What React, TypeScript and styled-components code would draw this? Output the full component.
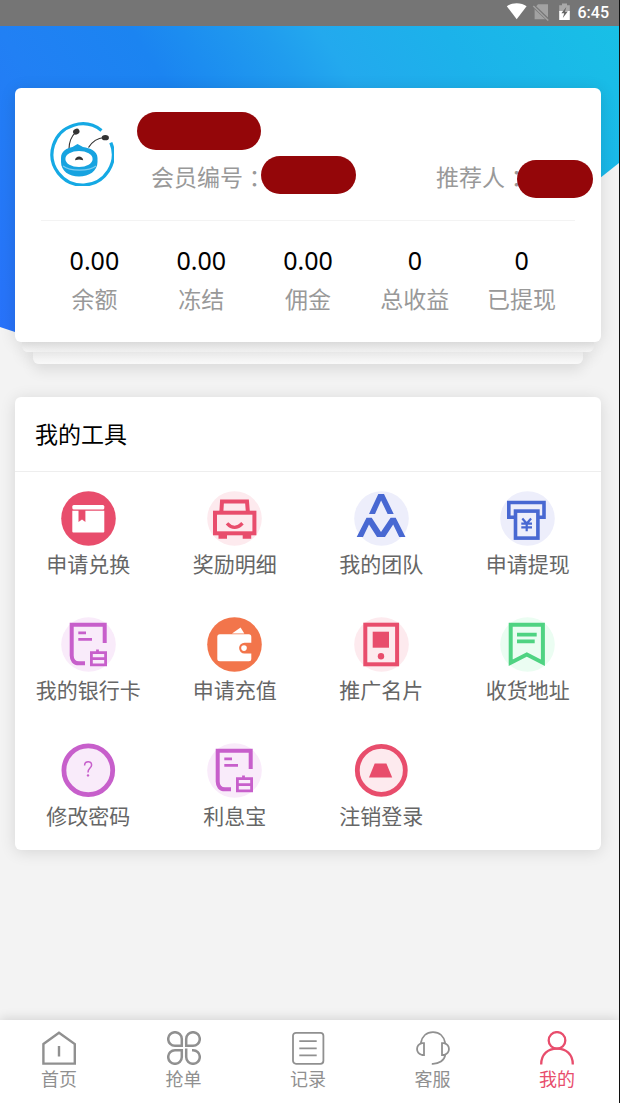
import React from "react";
import styled, { createGlobalStyle } from "styled-components";

const RED = "#e84d6c";
const PURPLE = "#c75fcb";
const BLUE = "#4868d2";
const GREEN = "#4fd382";
const ORANGE = "#f2754b";

const GlobalStyle = createGlobalStyle`
  *, *::before, *::after { box-sizing: border-box; }
  body {
    margin: 0;
    background: #f3f3f3;
    font-family: "Noto Sans", "Noto Sans CJK SC", sans-serif;
  }
  a { color: inherit; text-decoration: none; }
`;

const Page = styled.div`
  min-height: 100vh;
  display: flex;
  flex-direction: column;
  border-right: 1px solid #111;
`;

const StatusBar = styled.div`
  height: 26px;
  padding-right: 10px;
  display: flex;
  align-items: center;
  justify-content: flex-end;
  background: #757575;
  color: #fff;
  font: 500 16px/26px Roboto, sans-serif;
`;

const StatusIcons = styled.svg`
  width: 66px;
  height: 22px;
  margin-right: 6px;
`;

const Main = styled.main`
  position: relative;
  flex: 1;
  padding: 62px 18px 40px 15px;

  &::before {
    content: "";
    position: absolute;
    inset: 0 0 auto 0;
    height: 306px;
    background: linear-gradient(
      57deg,
      #2872fa 0%,
      #2180f4 24%,
      #1b84f1 40%,
      #1c8df0 46%,
      #209cee 56%,
      #23a9ee 63%,
      #1cb2ea 78%,
      #18c0e6 100%
    );
    clip-path: polygon(0 0, 100% 0, 100% 137px, calc(100% - 120px) 232px, 30px 311px, 0 301px);
  }
`;

const CardStack = styled.div`
  position: relative;
`;

const Card = styled.section`
  position: relative;
  background: #fff;
  border-radius: 6px;
  box-shadow: 0 2px 16px rgba(0, 0, 0, 0.12);
`;

const ProfileCard = styled(Card)`
  z-index: 1;
`;

const StackLayer = styled.div<{ $inset: number; $height: number }>`
  height: ${(p) => p.$height}px;
  margin: 0 ${(p) => p.$inset}px;
  border-radius: 0 0 6px 6px;
  background: linear-gradient(#ebebeb, #f9f9f9);
  box-shadow: 0 6px 14px rgba(0, 0, 0, 0.1);
`;

const Profile = styled.div`
  display: flex;
  gap: 22px;
  padding: 24px 8px 22px 33px;
`;

const Avatar = styled.svg`
  flex: none;
  width: 66px;
  height: 66px;
  margin: 8px 1px 0 0;
`;

const Info = styled.div`
  flex: 1;
`;

const Mask = styled.span<{ $width: number; $overlap?: number }>`
  position: relative;
  display: block;
  width: ${(p) => p.$width}px;
  height: 38px;
  margin-left: -${(p) => p.$overlap ?? 0}px;
  border-radius: 19px;
  background: #940609;
`;

const IdRow = styled.div`
  display: flex;
  justify-content: space-between;
  margin-top: 6px;
  padding-left: 14px;
`;

const IdField = styled.div<{ $align: string }>`
  display: flex;
  align-items: ${(p) => p.$align};
  color: #999;
  font-size: 23px;
  line-height: 42px;
  white-space: nowrap;
`;

const Colon = styled.span`
  font-family: "Noto Sans CJK TC", sans-serif;
`;

const Stats = styled.dl`
  display: flex;
  margin: 0 26px;
  padding: 19px 0 23px;
  border-top: 1px solid #f3f3f3;
`;

const Stat = styled.div`
  flex: 1;
  display: flex;
  flex-direction: column-reverse;
  text-align: center;
  white-space: nowrap;
`;

const StatLabel = styled.dt`
  color: #999;
  font-size: 23px;
  line-height: 39px;
`;

const StatValue = styled.dd`
  margin: 0;
  color: #000;
  font-size: 25px;
  line-height: 40px;
`;

const ToolsCard = styled(Card)`
  margin-top: 33px;
`;

const ToolsTitle = styled.h2`
  margin: 0;
  padding: 0 20px;
  border-bottom: 1px solid #eee;
  color: #000;
  font-size: 23px;
  font-weight: 400;
  line-height: 74px;
`;

const ToolGrid = styled.nav`
  display: grid;
  grid-template-columns: repeat(4, 1fr);
`;

const Tool = styled.a`
  display: flex;
  flex-direction: column;
  align-items: center;
  padding: 19px 0 16px;
  color: #666;
  font-size: 21px;
  line-height: 36px;
  white-space: nowrap;
`;

const ToolIcon = styled.svg`
  width: 55px;
  height: 55px;
  fill: none;
`;

const TabBar = styled.nav`
  position: sticky;
  bottom: 0;
  z-index: 2;
  display: flex;
  justify-content: space-between;
  height: 83px;
  padding: 11px 44px 0 41px;
  background: #fff;
  box-shadow: 0 -2px 10px rgba(0, 0, 0, 0.12);
`;

const Tab = styled.a<{ $active?: boolean }>`
  display: flex;
  flex-direction: column;
  align-items: center;
  color: ${(p) => (p.$active ? RED : "#909090")};
  font-size: 18px;
  line-height: 28px;
`;

const TabIcon = styled.svg`
  width: 34px;
  height: 34px;
  fill: none;
  stroke: currentColor;
  stroke-width: 2;
`;

const Disc = ({ color }: { color: string }) => <circle cx="27.5" cy="27.5" r="27.3" fill={color} />;

const ledgerIcon = (
  <>
    <Disc color="#f9ebfa" />
    <path d="M24 46.3H18C13 46.3 10.7 43 10.7 38.5V7.7H43.7V26" stroke={PURPLE} strokeWidth="4" />
    <path d="M17.3 15.8H25M17.3 22.3H31" stroke={PURPLE} strokeWidth="2.7" />
    <path d="M30.4 35.6H44.6V47.9H30.4ZM30.4 41.6H44.6M36.5 35V32.6" stroke={PURPLE} strokeWidth="2.8" />
  </>
);

const tools: { label: string; icon: React.ReactNode }[] = [
  {
    label: "申请兑换",
    icon: (
      <>
        <Disc color={RED} />
        <rect x="11.3" y="14" width="32" height="4.6" rx="1.5" fill="#fff" />
        <path d="M11.3 19.8H17.5V31L21 28.5L24.4 31V19.8H43.3V40.5Q43.3 41.5 42.3 41.5H12.3Q11.3 41.5 11.3 40.5Z" fill="#fff" />
      </>
    ),
  },
  {
    label: "奖励明细",
    icon: (
      <>
        <Disc color="#fdeaee" />
        <path d="M14.3 21.5L15 10.4H40L40.9 21.5" stroke={RED} strokeWidth="4" />
        <rect x="8" y="21.7" width="39.4" height="20.6" stroke={RED} strokeWidth="4" />
        <path d="M11.5 43H20V47.7H11.5ZM35.7 43H44.2V47.7H35.7Z" fill={RED} />
        <path d="M20 32.3Q27.5 40.5 35.5 32.3" stroke={RED} strokeWidth="3.4" />
      </>
    ),
  },
  {
    label: "我的团队",
    icon: (
      <>
        <Disc color="#edeefb" />
        <path d="M15 22.9L24.3 3H30L39.7 22.9H33.6L27.1 9.5L21 22.9Z" fill={BLUE} />
        <path d="M2.7 46L12.5 26.7H17.7L27 41L36.6 26.7H41.7L51.5 46H45.2L39.2 33.5L31 46H23L15 33.5L9 46Z" fill={BLUE} />
      </>
    ),
  },
  {
    label: "申请提现",
    icon: (
      <>
        <Disc color="#edeefb" />
        <path d="M14 26.3H8.8V11.5H44V26.3H39" stroke={BLUE} strokeWidth="3.6" />
        <rect x="15.5" y="20.1" width="22.4" height="27" stroke={BLUE} strokeWidth="3.6" />
        <path d="M22.3 27.5L26.7 32.5L31.1 27.5M26.7 32V40.3M21.3 32.7H32M21.3 36.4H32" stroke={BLUE} strokeWidth="2.2" />
      </>
    ),
  },
  { label: "我的银行卡", icon: ledgerIcon },
  {
    label: "申请充值",
    icon: (
      <>
        <Disc color={ORANGE} />
        <path d="M25 16.4L33.6 10.6L37.3 16.4Z" fill="#fff" />
        <rect x="10.3" y="17.3" width="34" height="27" rx="2.5" fill="#fff" />
        <path d="M45 25.7H37.5A5.4 5.4 0 0 0 37.5 36.5H45Z" fill={ORANGE} />
        <circle cx="37" cy="31.1" r="2.8" fill="#fff" />
      </>
    ),
  },
  {
    label: "推广名片",
    icon: (
      <>
        <Disc color="#fdeaee" />
        <rect x="11.3" y="7.7" width="31.8" height="39.6" stroke={RED} strokeWidth="4" />
        <rect x="18.7" y="14.7" width="16.3" height="16" fill={RED} />
        <circle cx="27" cy="39.3" r="3.2" fill={RED} />
      </>
    ),
  },
  {
    label: "收货地址",
    icon: (
      <>
        <Disc color="#ebfdf2" />
        <path d="M10.7 7.7H42.9V45.7L26.8 37.5L10.7 45.7Z" stroke={GREEN} strokeWidth="4" />
        <path d="M17 17.6H36.7M17 24.3H34.7" stroke={GREEN} strokeWidth="3.7" />
      </>
    ),
  },
  {
    label: "修改密码",
    icon: (
      <>
        <circle cx="27.3" cy="27.3" r="24.4" fill="#f9ebfa" stroke={PURPLE} strokeWidth="4.8" />
        <path d="M23.6 22.5C23.6 17.5 30.6 17.4 30.6 22C30.6 25.2 27 25 27 29.4" stroke={PURPLE} strokeWidth="1.5" />
        <circle cx="27" cy="32.4" r="1.2" fill={PURPLE} />
      </>
    ),
  },
  { label: "利息宝", icon: ledgerIcon },
  {
    label: "注销登录",
    icon: (
      <>
        <circle cx="27.3" cy="27.3" r="24" fill="#fdeaee" stroke={RED} strokeWidth="4.8" />
        <path d="M20.7 20.6H32.4L38.2 34.4H15Z" fill={RED} />
      </>
    ),
  },
];

const tabs: { label: string; active?: boolean; icon: React.ReactNode }[] = [
  { label: "首页", icon: <path d="M1.4 13L17 1.8L32.8 13V32.6H1.4ZM17 15V25.5" strokeWidth="2.4" /> },
  {
    label: "抢单",
    icon: (
      <g strokeWidth="2.5">
        <path d="M14.8 14.8H8A6.8 6.8 0 1 1 14.8 8Z" />
        <path d="M19.2 14.8V8A6.8 6.8 0 1 1 26 14.8Z" />
        <path d="M14.8 19.2V26A6.8 6.8 0 1 1 8 19.2Z" />
        <path d="M19.2 17.5V26A6.8 6.8 0 1 0 26 19.2H25" />
      </g>
    ),
  },
  {
    label: "记录",
    icon: (
      <g strokeWidth="1.8">
        <rect x="2" y="1.8" width="30.4" height="31" rx="3" />
        <path d="M8.3 10.2H25.7M8.3 17.3H25.7M8.3 24.3H25.7" />
      </g>
    ),
  },
  {
    label: "客服",
    icon: (
      <g strokeWidth="1.8">
        <path d="M4.8 12C6 5.5 10.5 1.2 17 1.2S28 5.5 29.2 12" />
        <path d="M8 12.2H6C-.6 14 -.6 22.2 6 24H8ZM26 12.2H28C34.6 14 34.6 22.2 28 24H26Z" />
        <path d="M29.2 24C28.5 29.5 23 33.2 15.8 32.8" />
      </g>
    ),
  },
  {
    label: "我的",
    active: true,
    icon: (
      <g strokeWidth="2.3">
        <circle cx="17" cy="9.4" r="8.3" />
        <path d="M1.2 33.4C1.2 23 8 17.7 17 17.7S32.8 23 32.8 33.4" />
      </g>
    ),
  },
];

const stats = [
  ["余额", "0.00"],
  ["冻结", "0.00"],
  ["佣金", "0.00"],
  ["总收益", "0"],
  ["已提现", "0"],
];

const Logo = () => (
  <Avatar viewBox="0 0 66 66" fill="none" aria-hidden="true">
    <path d="M53.5 10.4A30.6 30.6 0 1 0 62.8 22.6" stroke="#15a9e4" strokeWidth="3.2" />
    <path d="M21 29C21 23 23.5 16 27.5 12.5M40.5 27.5C44 22 50 18 56 17.5" stroke="#333" strokeWidth="1.2" />
    <ellipse cx="28.3" cy="11.7" rx="3.3" ry="2.8" transform="rotate(-30 28.3 11.7)" fill="#333" />
    <ellipse cx="57.3" cy="17.7" rx="3.6" ry="2.6" fill="#333" />
    <path d="M13 38C13 31 19 28 24.5 27L29.5 24L35 27C42 28 49.5 31 49.5 38V42C49.5 51 41 56.5 31 56.5S13 51 13 42Z" fill="#17a3e0" />
    <path d="M15 46C22 51.5 41 51.5 48 46" stroke="#7fcdf0" strokeWidth="1.2" />
    <ellipse cx="31" cy="39" rx="13.6" ry="8" fill="#fff" />
    <path d="M27 40.2C27.6 35.2 34.6 35.2 35.2 40.2L31 39.4Z" fill="#333" />
  </Avatar>
);

export default function App() {
  return (
    <Page>
      <GlobalStyle />
      <StatusBar>
        <StatusIcons viewBox="0 0 66 22" fill="none" aria-hidden="true">
          <path d="M0.8 4.3C6 .2 15.4 .2 20.6 4.3L10.7 17.2Z" fill="#fff" />
          <path d="M32 2.3H42V17.3H28.6V6Z" fill="#a2a2a2" />
          <path d="M26.5 3L43 18.7" stroke="#757575" strokeWidth="3.2" />
          <path d="M27.3 4L42.3 18.5" stroke="#a2a2a2" strokeWidth="1.5" />
          <path d="M53.2 3.2H56V1.4H61V3.2H63.8V10H53.2Z" fill="#a9a9a9" />
          <path d="M53.2 9H63.8V18H53.2Z" fill="#fff" />
          <path d="M60.3 5.1L55.4 11.2H58.2L56.8 15.9L61.8 9.6H59Z" fill="#666" />
        </StatusIcons>
        <time>6:45</time>
      </StatusBar>

      <Main>
        <CardStack>
          <ProfileCard>
            <Profile>
              <Logo />
              <Info>
                <Mask $width={124} />
                <IdRow>
                  <IdField $align="flex-start">
                    会员编号<Colon>：</Colon>
                    <Mask $width={95} $overlap={5} />
                  </IdField>
                  <IdField $align="flex-end">
                    推荐人<Colon>：</Colon>
                    <Mask $width={76} $overlap={11} />
                  </IdField>
                </IdRow>
              </Info>
            </Profile>
            <Stats>
              {stats.map(([label, value]) => (
                <Stat key={label}>
                  <StatLabel>{label}</StatLabel>
                  <StatValue>{value}</StatValue>
                </Stat>
              ))}
            </Stats>
          </ProfileCard>
          <StackLayer $inset={7} $height={10} />
          <StackLayer $inset={18} $height={12} />
        </CardStack>

        <ToolsCard>
          <ToolsTitle>我的工具</ToolsTitle>
          <ToolGrid>
            {tools.map((tool) => (
              <Tool key={tool.label} href="#">
                <ToolIcon viewBox="0 0 55 55" aria-hidden="true">
                  {tool.icon}
                </ToolIcon>
                {tool.label}
              </Tool>
            ))}
          </ToolGrid>
        </ToolsCard>
      </Main>

      <TabBar>
        {tabs.map((tab) => (
          <Tab key={tab.label} href="#" $active={tab.active}>
            <TabIcon viewBox="0 0 34 34" aria-hidden="true">
              {tab.icon}
            </TabIcon>
            {tab.label}
          </Tab>
        ))}
      </TabBar>
    </Page>
  );
}
